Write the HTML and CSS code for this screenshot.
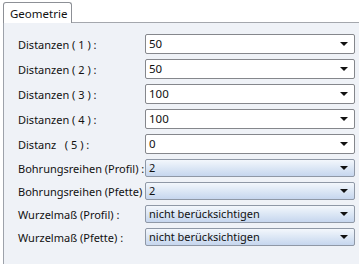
FILE: index.html
```html
<!DOCTYPE html>
<html lang="de">
  <head>
    <meta charset="UTF-8" />
    <meta name="viewport" content="width=device-width, initial-scale=1.0" />
    <title>Geometrie</title>
    <link rel="stylesheet" href="styles.css">
  </head>
  <body>
    <div class="tabs">
      <div class="tab active">Geometrie</div>
      <div class="tab-rest"></div>
    </div>
    <div class="panel">
      <div class="row text">
        <label class="label">Distanzen ( 1 ) :</label>
        <div class="combo">50</div>
      </div>
      <div class="row text">
        <label class="label">Distanzen ( 2 ) :</label>
        <div class="combo">50</div>
      </div>
      <div class="row text">
        <label class="label">Distanzen ( 3 ) :</label>
        <div class="combo">100</div>
      </div>
      <div class="row text">
        <label class="label">Distanzen ( 4 ) :</label>
        <div class="combo">100</div>
      </div>
      <div class="row text">
        <label class="label">Distanz &nbsp;&nbsp;( 5 ) :</label>
        <div class="combo">0</div>
      </div>
      <div class="row list">
        <label class="label">Bohrungsreihen (Profil) :</label>
        <div class="combo">2</div>
      </div>
      <div class="row list">
        <label class="label">Bohrungsreihen (Pfette) :</label>
        <div class="combo">2</div>
      </div>
      <div class="row list">
        <label class="label">Wurzelmaß (Profil) :</label>
        <div class="combo">nicht berücksichtigen</div>
      </div>
      <div class="row list">
        <label class="label">Wurzelmaß (Pfette) :</label>
        <div class="combo">nicht berücksichtigen</div>
      </div>
    </div>
  </body>
</html>
```

FILE: styles.css
```css
body {
  margin: 0;
  background-color: white;
  font-family: "Noto Sans", "Open Sans", sans-serif;
  font-size: 11px;
  color: #111;
}
.tabs {
  display: flex;
  height: 23px;
  padding-left: 3px;
}
.tab {
  margin-top: 2px;
  width: 69px;
  padding: 3px 0 0 6px;
  border: 1px solid #8d9096;
  border-bottom: none;
  border-radius: 3px 3px 0 0;
  background-color: white;
  box-sizing: border-box;
  font-size: 11.5px;
  white-space: nowrap;
}
.tab-rest {
  flex: 1;
  border-bottom: 1px solid #a4a7ad;
}
.panel {
  height: 241px;
  margin-left: 3px;
  padding: 11px 0 0 14px;
  border-left: 1px solid #9da2aa;
  background-color: #eff2f7;
  box-sizing: border-box;
}
.row {
  display: flex;
  align-items: center;
  margin-bottom: 5px;
}
.label {
  width: 127px;
  white-space: nowrap;
}
.combo {
  position: relative;
  width: 210px;
  padding-left: 3px;
  border: 1px solid #85878c;
  border-radius: 2px;
  box-sizing: border-box;
  background-color: white;
}
.row.text .combo {
  height: 20px;
  line-height: 18px;
  font-size: 11.5px;
}
.row.list .combo {
  height: 18px;
  line-height: 16px;
  border-color: #8f98a6;
  background: linear-gradient(#f3f7fc, #dce7f5 50%, #c6d6ee);
}
.combo::after {
  content: "";
  position: absolute;
  right: 6px;
  top: 50%;
  margin-top: -2px;
  border-left: 4px solid transparent;
  border-right: 4px solid transparent;
  border-top: 4px solid #111;
}
```
